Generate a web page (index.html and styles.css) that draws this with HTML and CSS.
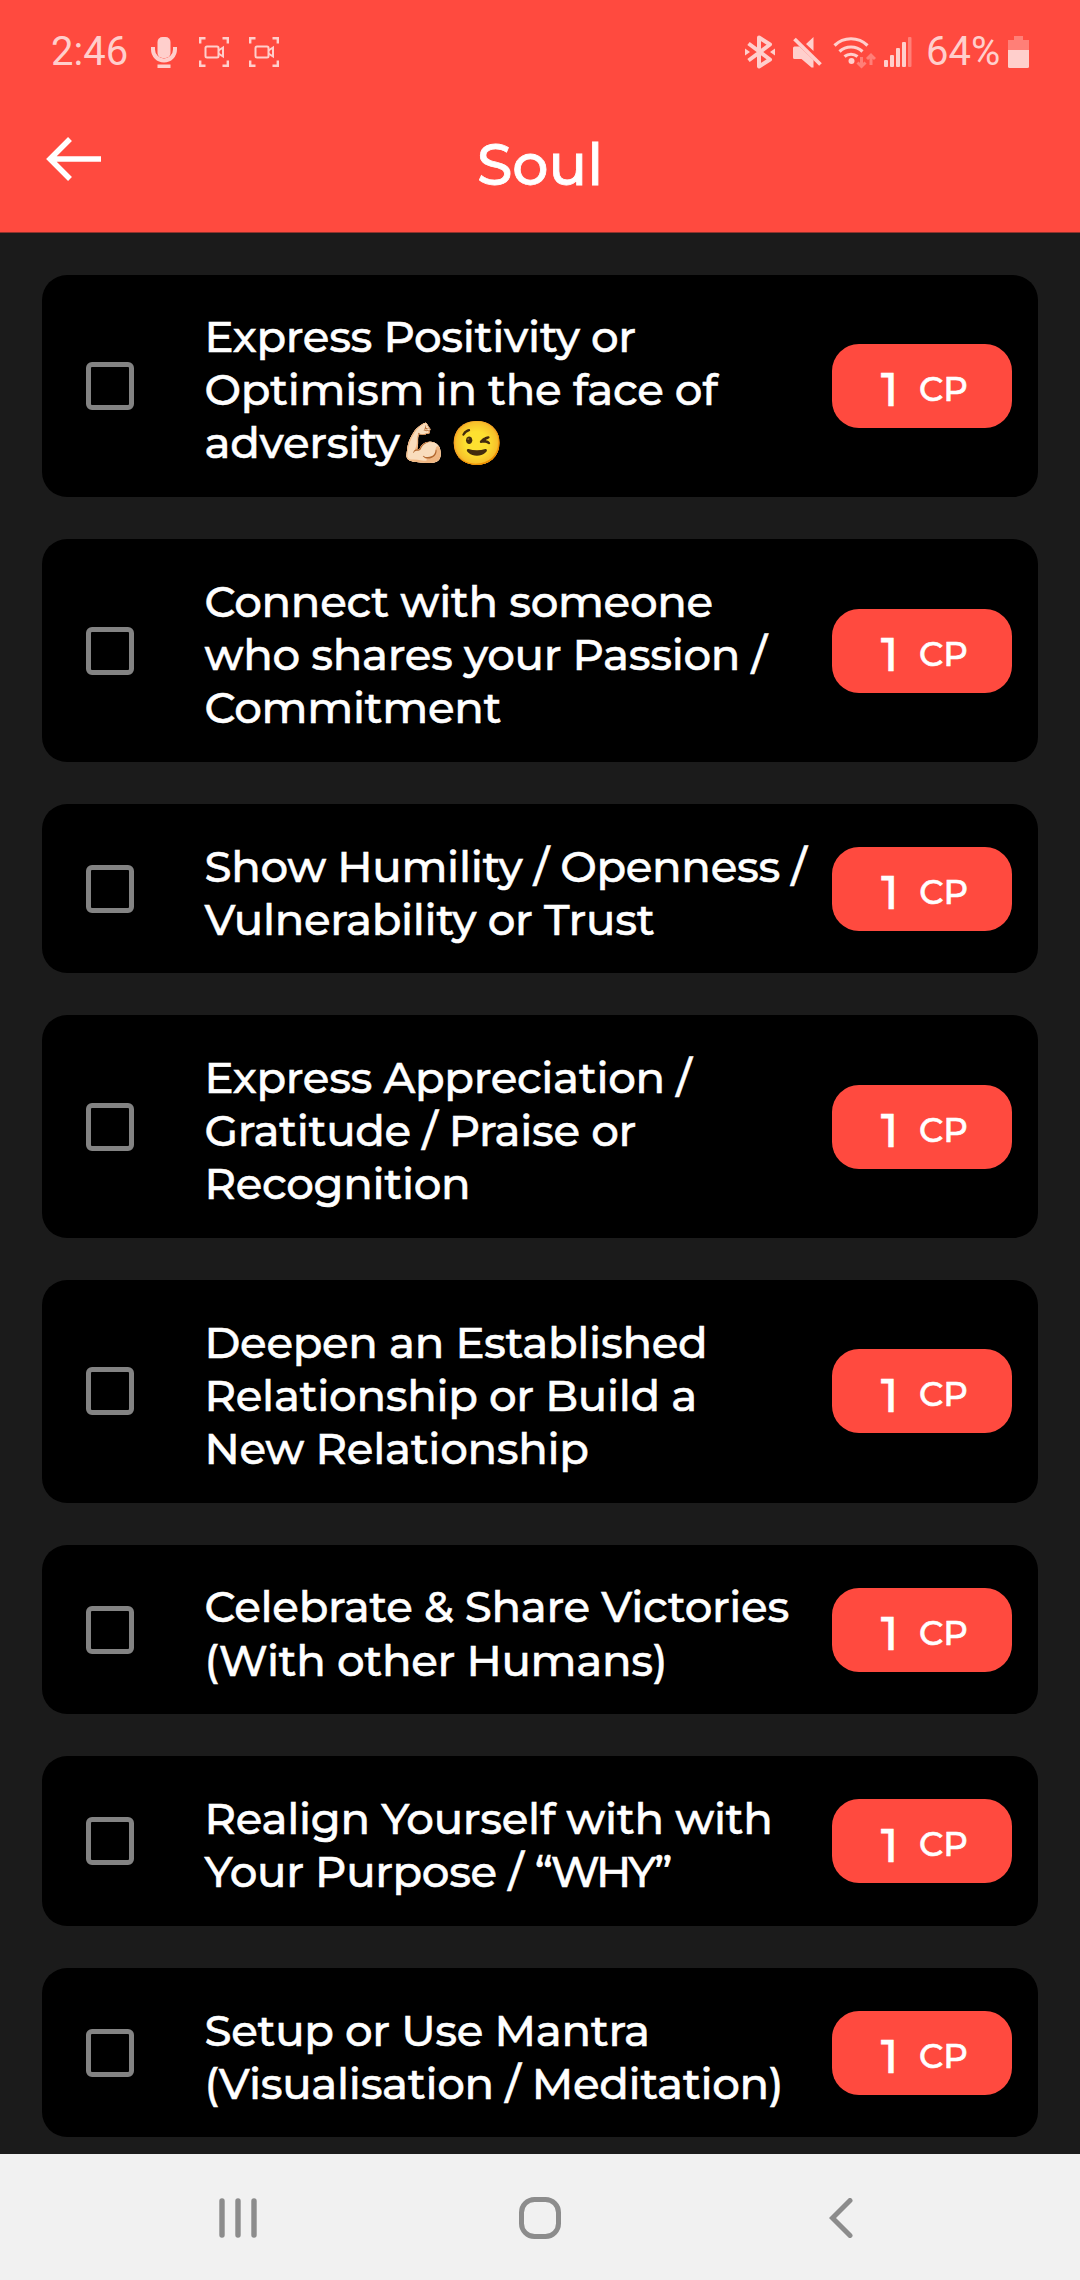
FILE: index.html
```html
<!DOCTYPE html>
<html lang="en">
<head>
<meta charset="utf-8">
<title>Soul</title>
<link rel="stylesheet" href="styles.css">
</head>
<body>
<header class="header">
  <div class="status">
    <div class="status-left">
      <span class="clock">2:46</span>
      <svg class="mic" width="26" height="33" viewBox="0 0 26 33" fill="currentColor">
        <rect x="6.5" y="1" width="13" height="21" rx="5"/>
        <path d="M2 11v2.500a11 11 0 0 0 22 0V11" fill="none" stroke="currentColor" stroke-width="4"/>
        <rect x="6.500" y="28.500" width="13" height="3.500"/>
      </svg>
      <svg class="scan" width="30" height="30" viewBox="0 0 30 30" fill="none" stroke="currentColor" stroke-width="2.400">
        <path d="M1.200 6.500V1.200h5.300M23.500 1.200h5.300v5.300M28.800 23.500v5.300h-5.300M6.500 28.800H1.200v-5.300"/>
        <rect x="6.500" y="9.500" width="13" height="11" rx="1.500" stroke-width="2"/>
        <path d="M19.500 13.500 24 10.500v9l-4.500-3" stroke-width="2"/>
      </svg>
      <svg class="scan" width="30" height="30" viewBox="0 0 30 30" fill="none" stroke="currentColor" stroke-width="2.400">
        <path d="M1.200 6.500V1.200h5.300M23.500 1.200h5.300v5.300M28.800 23.500v5.300h-5.300M6.500 28.800H1.200v-5.300"/>
        <rect x="6.500" y="9.500" width="13" height="11" rx="1.500" stroke-width="2"/>
        <path d="M19.500 13.500 24 10.500v9l-4.500-3" stroke-width="2"/>
      </svg>
    </div>
    <div class="status-right">
      <svg class="bluetooth" width="30" height="34" viewBox="0 0 30 34">
        <path d="M3.500 8.500 25 24.500 14 31.500V2.500L25 9.500 3.500 25.500" fill="none" stroke="currentColor" stroke-width="4" stroke-linejoin="round"/>
        <path d="M0 13.500 5 17l-5 3.500zM30 13.500 25 17l5 3.500z" fill="currentColor"/>
      </svg>
      <svg class="mute" width="30" height="33" viewBox="0 0 30 33" fill="currentColor">
        <path d="M21.500 1v14L14 8zM2.500 10.500h5L21.500 24v7.500h-2L9.500 23h-7Q1 23 1 21.500V12q0-1.500 1.500-1.500z"/>
        <path d="M2.500 3 28.500 28.500" stroke="currentColor" stroke-width="3.800"/>
      </svg>
      <svg class="wifi" width="43" height="33" viewBox="0 0 43 33">
        <g fill="none" stroke="currentColor" stroke-width="3.200">
          <path d="M1.500 9.500a23.500 23.500 0 0 1 33 0"/>
          <path d="M6.500 15.500a17 17 0 0 1 23 0"/>
          <path d="M11.500 20.500a10.500 10.500 0 0 1 13 0"/>
        </g>
        <circle cx="18.500" cy="25" r="3" fill="currentColor"/>
        <path class="dim" d="M28.500 21v9.500M24.500 26.500l4 4 4-4M38 29v-10M34 23l4-4 4 4" fill="none" stroke="currentColor" stroke-width="3"/>
      </svg>
      <svg class="signal" width="28" height="30" viewBox="0 0 28 30" fill="currentColor">
        <rect x="0" y="23" width="4" height="7" rx="1"/>
        <rect x="6" y="18" width="4" height="12" rx="1"/>
        <rect x="12" y="11" width="4" height="19" rx="1"/>
        <rect x="18" y="5" width="4" height="25" rx="1"/>
        <rect class="dim" x="24" y="0" width="3.500" height="30" rx="1"/>
      </svg>
      <span class="percent">64%</span>
      <svg class="battery" width="21" height="32" viewBox="0 0 21 32" fill="currentColor">
        <path class="dim" d="M6 0h9v4h6v10H0V4h6z"/>
        <path d="M0 14h21v16.500q0 1.500-1.500 1.500h-18Q0 32 0 30.500z"/>
      </svg>
    </div>
  </div>
  <div class="appbar">
    <svg class="back" width="56" height="44" viewBox="0 0 56 44" fill="none" stroke="currentColor" stroke-width="5.500">
      <path d="M55 22H4M24 2 4 22l20 20"/>
    </svg>
    <h1 class="title">Soul</h1>
  </div>
</header>

<main class="list">
  <article class="card">
    <span class="checkbox"></span>
    <p class="task">Express Positivity or<br>Optimism in the face of<br>adversity<span class="emoji">💪🏻</span><span class="emoji wink">😉</span></p>
    <div class="points"><span class="num">1</span><span class="unit">CP</span></div>
  </article>
  <article class="card">
    <span class="checkbox"></span>
    <p class="task">Connect with someone<br>who shares your Passion /<br>Commitment</p>
    <div class="points"><span class="num">1</span><span class="unit">CP</span></div>
  </article>
  <article class="card">
    <span class="checkbox"></span>
    <p class="task">Show Humility / Openness /<br>Vulnerability or Trust</p>
    <div class="points"><span class="num">1</span><span class="unit">CP</span></div>
  </article>
  <article class="card">
    <span class="checkbox"></span>
    <p class="task">Express Appreciation /<br>Gratitude / Praise or<br>Recognition</p>
    <div class="points"><span class="num">1</span><span class="unit">CP</span></div>
  </article>
  <article class="card">
    <span class="checkbox"></span>
    <p class="task">Deepen an Established<br>Relationship or Build a<br>New Relationship</p>
    <div class="points"><span class="num">1</span><span class="unit">CP</span></div>
  </article>
  <article class="card">
    <span class="checkbox"></span>
    <p class="task">Celebrate &amp; Share Victories<br>(With other Humans)</p>
    <div class="points"><span class="num">1</span><span class="unit">CP</span></div>
  </article>
  <article class="card">
    <span class="checkbox"></span>
    <p class="task">Realign Yourself with with<br>Your Purpose / <span class="quoted">“WHY”</span></p>
    <div class="points"><span class="num">1</span><span class="unit">CP</span></div>
  </article>
  <article class="card">
    <span class="checkbox"></span>
    <p class="task">Setup or Use Mantra<br>(Visualisation / Meditation)</p>
    <div class="points"><span class="num">1</span><span class="unit">CP</span></div>
  </article>
</main>

<nav class="navbar">
  <svg width="38" height="40" viewBox="0 0 38 40" fill="none" stroke="currentColor" stroke-width="5.400" stroke-linecap="round">
    <path d="M3 3v34M19 3v34M35 3v34"/>
  </svg>
  <svg class="home" width="42" height="42" viewBox="0 0 42 42" fill="none" stroke="currentColor" stroke-width="5">
    <rect x="2.500" y="2.500" width="37" height="37" rx="13"/>
  </svg>
  <svg class="previous" width="24" height="40" viewBox="0 0 24 40" fill="none" stroke="currentColor" stroke-width="5" stroke-linecap="round">
    <path d="M21 2.500 3.500 20 21 37.500"/>
  </svg>
</nav>
</body>
</html>
```
FILE: styles.css
```css
* { box-sizing: border-box; }

body {
  margin: 0;
  width: 1080px;
  height: 2280px;
  overflow: hidden;
  display: flex;
  flex-direction: column;
  background: #1b1b1b;
  color: #fff;
  font-family: Montserrat, Inter, sans-serif;
  font-weight: 500;
}

svg { display: block; flex: none; }

.header {
  flex: none;
  height: 233px;
  border-bottom: 1px solid #8f332d;
  background: #ff4a3f;
}

.status {
  display: flex;
  justify-content: space-between;
  height: 104px;
  padding: 0 51px;
  color: #ffcfcc;
  font: 400 40px/104px Roboto, sans-serif;
}

.status-left, .status-right { display: flex; align-items: center; }
.clock { width: 76px; }
.mic { margin-left: 24px; }
.scan { margin-left: 20px; }
.mic + .scan { margin-left: 22px; }
.mute { margin-left: 17px; }
.wifi { margin-left: 11px; }
.signal { margin-left: 8px; }
.percent { margin-left: 14px; width: 72px; }
.battery { margin-left: 10px; }
.dim { opacity: .4; }

.appbar {
  display: grid;
  grid-template-columns: 56px 1fr 56px;
  align-items: center;
  height: 120px;
  padding: 0 46px;
}

.back { margin-bottom: 10px; }

.title {
  margin: 2px 0 0;
  text-align: center;
  font-size: 57px;
  font-weight: 500;
  line-height: 80px;
  -webkit-text-stroke: .8px currentColor;
}

.list {
  flex: 1;
  min-height: 0;
  overflow: hidden;
  display: flex;
  flex-direction: column;
  gap: 42px;
  padding: 41.6px 42px 0;
}

.card {
  flex: none;
  display: flex;
  align-items: center;
  padding: 31.7px 26px 31.7px 44px;
  border-radius: 25px;
  background: #000;
}

.checkbox {
  flex: none;
  width: 48px;
  height: 48px;
  border: 5.500px solid #838383;
  border-radius: 6px;
}

.task {
  flex: 1;
  margin: -4px 26px -4px 70.5px;
  padding-top: 8px;
  white-space: nowrap;
  font-size: 43.5px;
  letter-spacing: -.32px;
  line-height: 53.1px;
  -webkit-text-stroke: .5px currentColor;
}

.quoted { letter-spacing: -2.9px; }

.emoji {
  display: inline-block;
  height: 53.1px;
  vertical-align: top;
  font-size: 38px;
}

.wink {
  margin-left: 3px;
  font-size: 43px;
}

.points {
  flex: none;
  display: flex;
  align-items: center;
  width: 180px;
  height: 84px;
  padding-left: 49px;
  border-radius: 27px;
  background: #ff4a3f;
  -webkit-text-stroke: .6px currentColor;
}

.num { width: 38px; font-size: 46.5px; padding-top: 8px; }
.unit { font-size: 34px; padding-top: 6px; }

.navbar {
  flex: none;
  display: flex;
  align-items: center;
  height: 126px;
  padding: 2px 0 0 219px;
  background: #f1f1f1;
  color: #8c8c8c;
}

.home { margin-left: 262px; }
.previous { margin-left: 268px; }
```
